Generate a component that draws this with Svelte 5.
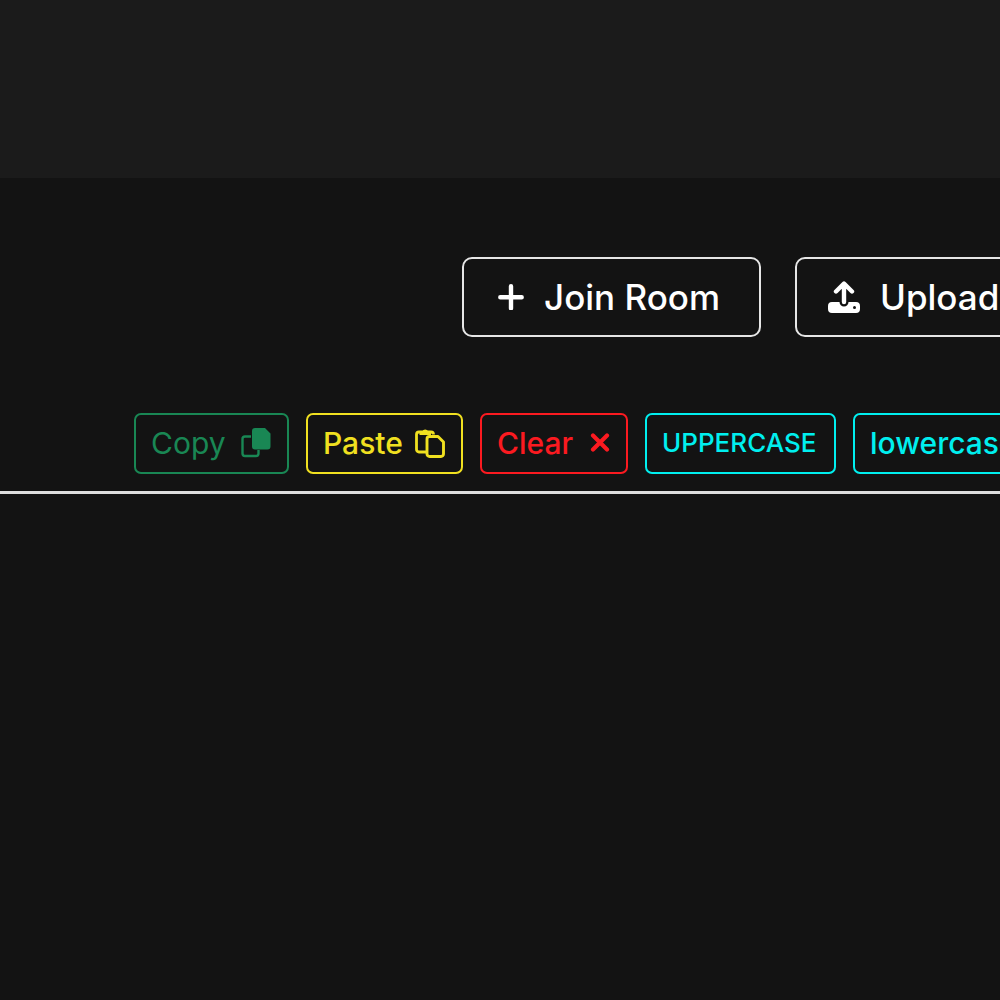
<script>
  const tools = [
    { label: 'Copy', kind: 'copy' },
    { label: 'Paste', kind: 'paste' },
    { label: 'Clear', kind: 'clear' },
    { label: 'UPPERCASE', kind: 'upper' },
    { label: 'lowercase', kind: 'lower' }
  ];
</script>

<div class="page">
  <header></header>
  <main>
    <div class="actions">
      <button class="action join">
        <svg width="26" height="26" viewBox="0 0 26 26" aria-hidden="true">
          <path d="M13 2.300v22M2.300 13.300h21.400" fill="none" stroke="currentColor" stroke-width="4.400" stroke-linecap="round" />
        </svg>
        <span>Join Room</span>
      </button>
      <button class="action upload">
        <svg width="32" height="32" viewBox="0 0 32 32" aria-hidden="true">
          <path d="M4 21h7.500a4.500 4.500 0 0 0 9 0H28a4 4 0 0 1 4 4v3a4 4 0 0 1-4 4H4a4 4 0 0 1-4-4v-3a4 4 0 0 1 4-4z" fill="currentColor" />
          <path d="M16 21V4M8 10.500l8-8 8 8" fill="none" stroke="currentColor" stroke-width="4.400" stroke-linecap="round" stroke-linejoin="round" />
          <circle cx="26.500" cy="26.500" r="1.500" fill="#131313" />
        </svg>
        <span>Upload</span>
      </button>
    </div>

    <div class="toolbar">
      {#each tools as tool}
        <button class="tool {tool.kind}">
          <span>{tool.label}</span>
          {#if tool.kind === 'copy'}
            <svg width="30" height="30" viewBox="0 0 30 30" aria-hidden="true">
              <path d="M14 0h10l5.500 5.500V18.500a3 3 0 0 1-3 3H14a3 3 0 0 1-3-3V3a3 3 0 0 1 3-3z" fill="currentColor" />
              <path d="M10 8.500H4a2.500 2.500 0 0 0-2.500 2.500v14.500A2.500 2.500 0 0 0 4 28h11a2.500 2.500 0 0 0 2.500-2.500V22" fill="none" stroke="currentColor" stroke-width="2.400" />
            </svg>
          {:else if tool.kind === 'paste'}
            <svg width="30" height="30" viewBox="0 0 30 30" aria-hidden="true">
              <path d="M11 24H4a2.500 2.500 0 0 1-2.500-2.500V6.500A2.500 2.500 0 0 1 4 4h12a2.500 2.500 0 0 1 2.500 2.500" fill="none" stroke="currentColor" stroke-width="2.800" />
              <path d="M4.500 3.500h2.700a3.300 3.300 0 0 1 6 0h2.800V7H4.500z" fill="currentColor" />
              <path d="M14.500 8.500h8.500l5.500 5.500v12a2.500 2.500 0 0 1-2.500 2.500H14.500A2.500 2.500 0 0 1 12 26V11a2.500 2.500 0 0 1 2.500-2.500z" fill="none" stroke="currentColor" stroke-width="2.900" stroke-linejoin="round" />
            </svg>
          {:else if tool.kind === 'clear'}
            <svg width="20" height="20" viewBox="0 0 20 20" aria-hidden="true">
              <path d="M3 2.500l14 14M17 2.500l-14 14" fill="none" stroke="currentColor" stroke-width="4.200" stroke-linecap="round" />
            </svg>
          {/if}
        </button>
      {/each}
    </div>
  </main>
</div>

<style>
  :global(body) {
    background: #131313;
  }
  .page {
    min-height: 100vh;
    overflow: hidden;
    background: #131313;
    font-family: Inter, "Noto Sans", sans-serif;
  }
  header {
    height: 178px;
    background: #1b1b1b;
  }
  main {
    padding-top: 79px;
  }
  button {
    display: flex;
    flex: none;
    align-items: center;
    margin: 0;
    background: transparent;
    font-family: inherit;
    white-space: nowrap;
    cursor: pointer;
  }
  svg {
    display: block;
    flex: none;
  }
  .actions {
    display: flex;
    gap: 34px;
    padding-left: 462px;
  }
  .action {
    box-sizing: border-box;
    height: 80px;
    padding: 0 31px;
    border: 2px solid #e6e6e6;
    border-radius: 10px;
    color: #fff;
    font-size: 35px;
    font-weight: 500;
  }
  .join {
    min-width: 299px;
    gap: 20px;
    padding-left: 34px;
  }
  .upload {
    gap: 20px;
  }
  .toolbar {
    display: flex;
    gap: 17px;
    padding: 76px 0 17px 134px;
    border-bottom: 3px solid #dedede;
  }
  .tool {
    box-sizing: border-box;
    justify-content: space-between;
    height: 61px;
    padding: 0 16px 2px 15px;
    border: 2px solid currentColor;
    border-radius: 7px;
    font-size: 30px;
    font-weight: 500;
  }
  .copy {
    width: 155px;
    color: #198754;
    font-weight: 400;
  }
  .paste {
    width: 157px;
    color: #f0e020;
  }
  .clear {
    width: 148px;
    color: #fb1a20;
  }
  .upper,
  .lower {
    width: 191px;
    color: #00efef;
  }
  .upper {
    font-size: 26px;
  }
</style>
